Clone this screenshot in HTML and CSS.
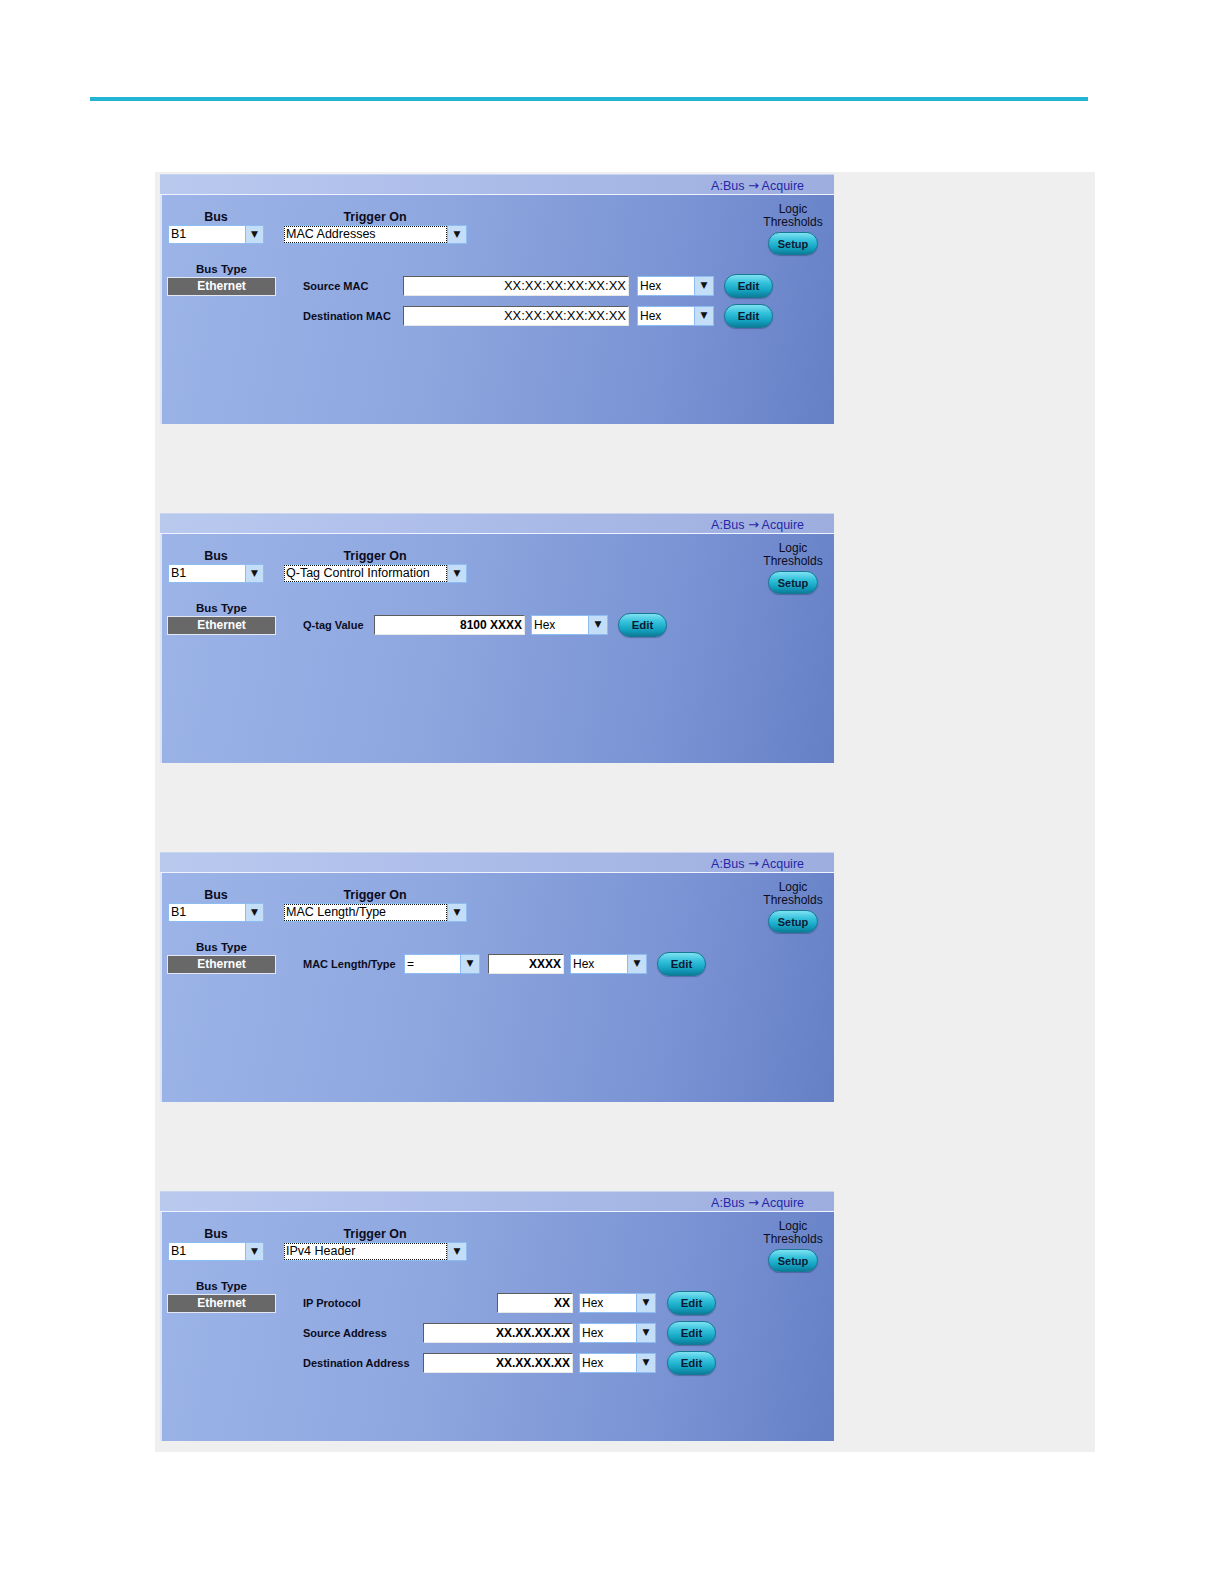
FILE: index.html
```html
<!DOCTYPE html>
<html>
<head>
<meta charset="utf-8">
<title>Ethernet trigger setups</title>
<link rel="stylesheet" href="styles.css">
</head>
<body>
<div class="rule"></div>
<div class="sheet">

  <section class="panel">
    <div class="titlebar">A:Bus <span class="arrow">→</span> Acquire</div>
    <div class="body">
      <div class="top">
        <div class="bus-group">
          <div class="glabel">Bus</div>
          <div class="dd dd-bus"><span class="dd-field">B1</span><span class="dd-arrow">▼</span></div>
        </div>
        <div class="trig-group">
          <div class="glabel">Trigger On</div>
          <div class="dd dd-trig"><span class="dd-field"><span class="focus">MAC Addresses</span></span><span class="dd-arrow">▼</span></div>
        </div>
        <div class="logic">
          <div class="logic-t">Logic</div>
          <div class="logic-t">Thresholds</div>
          <div class="pill setup">Setup</div>
        </div>
      </div>
      <div class="lower">
        <div class="bustype">
          <div class="bt-label">Bus Type</div>
          <div class="eth">Ethernet</div>
        </div>
        <div class="rows">
          <div class="row">
            <span class="rlabel rl-mac">Source MAC</span>
            <span class="tin tin-mac">XX:XX:XX:XX:XX:XX</span>
            <span class="dd dd-hex gap8"><span class="dd-field">Hex</span><span class="dd-arrow">▼</span></span>
            <span class="pill edit">Edit</span>
          </div>
          <div class="row">
            <span class="rlabel rl-mac">Destination MAC</span>
            <span class="tin tin-mac">XX:XX:XX:XX:XX:XX</span>
            <span class="dd dd-hex gap8"><span class="dd-field">Hex</span><span class="dd-arrow">▼</span></span>
            <span class="pill edit">Edit</span>
          </div>
        </div>
      </div>
    </div>
  </section>

  <section class="panel">
    <div class="titlebar">A:Bus <span class="arrow">→</span> Acquire</div>
    <div class="body">
      <div class="top">
        <div class="bus-group">
          <div class="glabel">Bus</div>
          <div class="dd dd-bus"><span class="dd-field">B1</span><span class="dd-arrow">▼</span></div>
        </div>
        <div class="trig-group">
          <div class="glabel">Trigger On</div>
          <div class="dd dd-trig"><span class="dd-field"><span class="focus">Q-Tag Control Information</span></span><span class="dd-arrow">▼</span></div>
        </div>
        <div class="logic">
          <div class="logic-t">Logic</div>
          <div class="logic-t">Thresholds</div>
          <div class="pill setup">Setup</div>
        </div>
      </div>
      <div class="lower">
        <div class="bustype">
          <div class="bt-label">Bus Type</div>
          <div class="eth">Ethernet</div>
        </div>
        <div class="rows">
          <div class="row">
            <span class="rlabel rl-q">Q-tag Value</span>
            <span class="tin tin-q bold">8100 XXXX</span>
            <span class="dd dd-hex"><span class="dd-field">Hex</span><span class="dd-arrow">▼</span></span>
            <span class="pill edit">Edit</span>
          </div>
        </div>
      </div>
    </div>
  </section>

  <section class="panel">
    <div class="titlebar">A:Bus <span class="arrow">→</span> Acquire</div>
    <div class="body">
      <div class="top">
        <div class="bus-group">
          <div class="glabel">Bus</div>
          <div class="dd dd-bus"><span class="dd-field">B1</span><span class="dd-arrow">▼</span></div>
        </div>
        <div class="trig-group">
          <div class="glabel">Trigger On</div>
          <div class="dd dd-trig"><span class="dd-field"><span class="focus">MAC Length/Type</span></span><span class="dd-arrow">▼</span></div>
        </div>
        <div class="logic">
          <div class="logic-t">Logic</div>
          <div class="logic-t">Thresholds</div>
          <div class="pill setup">Setup</div>
        </div>
      </div>
      <div class="lower">
        <div class="bustype">
          <div class="bt-label">Bus Type</div>
          <div class="eth">Ethernet</div>
        </div>
        <div class="rows">
          <div class="row">
            <span class="rlabel rl-len">MAC Length/Type</span>
            <span class="dd dd-eq"><span class="dd-field">=</span><span class="dd-arrow">▼</span></span>
            <span class="tin tin-4 gap8 bold">XXXX</span>
            <span class="dd dd-hex"><span class="dd-field">Hex</span><span class="dd-arrow">▼</span></span>
            <span class="pill edit">Edit</span>
          </div>
        </div>
      </div>
    </div>
  </section>

  <section class="panel">
    <div class="titlebar">A:Bus <span class="arrow">→</span> Acquire</div>
    <div class="body">
      <div class="top">
        <div class="bus-group">
          <div class="glabel">Bus</div>
          <div class="dd dd-bus"><span class="dd-field">B1</span><span class="dd-arrow">▼</span></div>
        </div>
        <div class="trig-group">
          <div class="glabel">Trigger On</div>
          <div class="dd dd-trig"><span class="dd-field"><span class="focus">IPv4 Header</span></span><span class="dd-arrow">▼</span></div>
        </div>
        <div class="logic">
          <div class="logic-t">Logic</div>
          <div class="logic-t">Thresholds</div>
          <div class="pill setup">Setup</div>
        </div>
      </div>
      <div class="lower">
        <div class="bustype">
          <div class="bt-label">Bus Type</div>
          <div class="eth">Ethernet</div>
        </div>
        <div class="rows">
          <div class="row">
            <span class="rlabel rl-ip">IP Protocol</span>
            <span class="tin tin-4 push74 bold">XX</span>
            <span class="dd dd-hex"><span class="dd-field">Hex</span><span class="dd-arrow">▼</span></span>
            <span class="pill edit gap11">Edit</span>
          </div>
          <div class="row">
            <span class="rlabel rl-ip">Source Address</span>
            <span class="tin tin-ip bold">XX.XX.XX.XX</span>
            <span class="dd dd-hex"><span class="dd-field">Hex</span><span class="dd-arrow">▼</span></span>
            <span class="pill edit gap11">Edit</span>
          </div>
          <div class="row">
            <span class="rlabel rl-ip">Destination Address</span>
            <span class="tin tin-ip bold">XX.XX.XX.XX</span>
            <span class="dd dd-hex"><span class="dd-field">Hex</span><span class="dd-arrow">▼</span></span>
            <span class="pill edit gap11">Edit</span>
          </div>
        </div>
      </div>
    </div>
  </section>

</div>
</body>
</html>
```

FILE: styles.css
```css
* { box-sizing: border-box; }

body {
  margin: 0;
  background: #ffffff;
  font-family: "Liberation Sans", Arial, sans-serif;
  color: #000;
}

.rule {
  margin: 97px 0 0 90px;
  width: 998px;
  height: 4px;
  background: #22b4d2;
}

.sheet {
  margin: 71px 0 0 155px;
  width: 940px;
  padding: 2px 0 11px 5px;
  background: #efefef;
  display: flex;
  flex-direction: column;
  gap: 89px;
}

.panel {
  width: 674px;
  height: 250px;
  display: flex;
  flex-direction: column;
}

.titlebar {
  height: 21px;
  padding: 3px 30px 0 0;
  text-align: right;
  font-size: 12.5px;
  line-height: 15px;
  color: #2626a8;
  background: linear-gradient(90deg, #b9c9ee 0%, #adbdea 45%, #9dadde 100%);
  border-bottom: 1px solid #eef3ff;
  border-top: 1px solid #c9d4ee;
}

.arrow {
  font-family: "DejaVu Sans", sans-serif;
  font-size: 13px;
  line-height: 15px;
}

.body {
  flex: 1;
  border-left: 2px solid #dce4f6;
  padding: 14px 0 0 6px;
  background: linear-gradient(100deg, #9cb4e7 0%, #8ea7df 40%, #7b95d5 72%, #6680c6 100%);
}

.top {
  display: flex;
  align-items: flex-start;
  height: 35px;
}

.bus-group { width: 96px; }
.trig-group { width: 184px; margin-left: 19px; }

.glabel {
  height: 16px;
  text-align: center;
  font-weight: bold;
  font-size: 12.5px;
  line-height: 16px;
  color: #0c0c1c;
}

.dd {
  display: flex;
  height: 19px;
  flex-shrink: 0;
}

.dd-field {
  flex: 1;
  background: #fff;
  border: 1px solid #8dbdf0;
  border-right: none;
  font-size: 12.5px;
  line-height: 17px;
  padding-left: 2px;
  white-space: nowrap;
  overflow: hidden;
}

.dd-arrow {
  width: 19px;
  background: #c4def8;
  border: 1px solid #8dbdf0;
  font-family: "DejaVu Sans", sans-serif;
  font-size: 9px;
  line-height: 16px;
  text-align: center;
  color: #111;
}

.dd-trig .dd-field { padding: 1px; }
.dd-trig .dd-arrow { width: 20px; }

.focus {
  display: block;
  height: 15px;
  line-height: 14px;
  padding-left: 1px;
  outline: 1px dotted #111;
  outline-offset: 0;
}

.logic {
  margin-left: auto;
  margin-right: 6px;
  margin-top: -6px;
  width: 70px;
  display: flex;
  flex-direction: column;
  align-items: center;
}

.logic-t {
  font-size: 12px;
  line-height: 13px;
  color: #0c0c1c;
}

.pill {
  display: flex;
  align-items: center;
  justify-content: center;
  border-radius: 12px;
  border: 1px solid #177892;
  background: linear-gradient(180deg, #7fe2f2 0%, #35c2dc 35%, #14a4c2 70%, #0b7d99 100%);
  box-shadow: 0 1px 1px rgba(20, 40, 90, 0.35);
  color: #0b1a33;
  font-weight: bold;
  font-size: 11.5px;
  flex-shrink: 0;
}

.setup {
  margin-top: 3px;
  width: 50px;
  height: 23px;
  font-size: 11px;
}

.edit {
  width: 49px;
  height: 24px;
  margin-left: 10px;
}

.gap11 { margin-left: 11px; }

.lower {
  display: flex;
  margin-top: 18px;
}

.bustype {
  width: 109px;
  margin-left: -1px;
}

.bt-label {
  height: 15px;
  text-align: center;
  font-weight: bold;
  font-size: 11.5px;
  line-height: 15px;
  color: #0c0c1c;
}

.eth {
  height: 19px;
  background: #686868;
  border: 1px solid #e4e8f2;
  color: #fff;
  font-weight: bold;
  font-size: 12px;
  line-height: 17px;
  text-align: center;
}

.rows {
  margin-left: 27px;
  padding-top: 14px;
  display: flex;
  flex-direction: column;
  gap: 10px;
}

.row {
  display: flex;
  align-items: center;
  height: 20px;
}

.rlabel {
  font-weight: bold;
  font-size: 11px;
  flex-shrink: 0;
  color: #0c0c1c;
  white-space: nowrap;
}

.rl-mac { width: 100px; }
.rl-q { width: 71px; }
.rl-len { width: 101px; }
.rl-ip { width: 120px; }

.tin {
  height: 20px;
  background: #fff;
  border: 1px solid;
  border-color: #5c5c5c #e8e8e8 #e8e8e8 #5c5c5c;
  text-align: right;
  padding-right: 2px;
  font-size: 13px;
  line-height: 18px;
  flex-shrink: 0;
}

.tin.bold { font-weight: bold; font-size: 12px; }

.tin-mac { width: 226px; }
.tin-q { width: 151px; }
.tin-4 { width: 76px; }
.tin-ip { width: 150px; }

.push74 { margin-left: 74px; }

.dd-hex { width: 77px; margin-left: 6px; height: 20px; }
.dd-hex .dd-field { line-height: 18px; font-size: 12px; }
.dd-hex .dd-arrow { width: 20px; line-height: 17px; }
.dd-eq { width: 76px; height: 20px; }
.dd-eq .dd-field { line-height: 18px; font-size: 12px; }
.dd-eq .dd-arrow { width: 20px; line-height: 17px; }

.gap8 { margin-left: 8px; }
```
